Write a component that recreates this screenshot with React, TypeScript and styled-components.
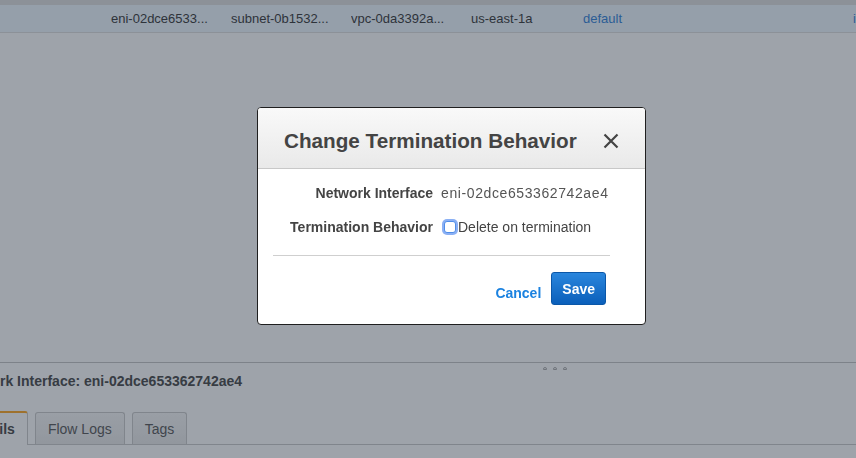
import React, { useState } from 'react';
import styled, { createGlobalStyle } from 'styled-components';

const GlobalStyle = createGlobalStyle`
  html, body {
    margin: 0;
    padding: 0;
    height: 100%;
    overflow: hidden;
    background: #ffffff;
    font-family: "Liberation Sans", Arial, Helvetica, sans-serif;
    color: #444;
  }
  #root {
    height: 100%;
  }
`;

const Page = styled.div`
  display: flex;
  flex-direction: column;
  height: 100vh;
  overflow: hidden;
`;

const TopStrip = styled.div`
  height: 5px;
  background: #dedede;
`;

const TableRow = styled.div`
  display: grid;
  grid-template-columns: 111px 120px 120px 120px 112px 270px 1fr;
  align-items: center;
  height: 27px;
  background: #eef7ff;
  border-bottom: 1px solid #dedede;
  font-size: 13px;
  color: #333;
  white-space: nowrap;
`;

const Cell = styled.div<{ $link?: boolean }>`
  overflow: hidden;
  color: ${({ $link }) => ($link ? '#2f7fd9' : '#333')};
`;

const MainArea = styled.div`
  flex: 1;
`;

const LowerPane = styled.div`
  height: 95px;
  border-top: 1px solid #c4c4c4;
  overflow: hidden;
`;

const Handle = styled.div`
  display: flex;
  gap: 6px;
  height: 10px;
  padding-left: 543px;
  padding-top: 4px;
  box-sizing: border-box;
`;

const HandleDot = styled.span`
  width: 4px;
  height: 3px;
  border: 1px solid #aaa;
  border-radius: 2px 2px 0 0;
  box-sizing: border-box;
`;

const PaneInner = styled.div`
  margin-left: -44px;
`;

const PaneTitle = styled.div`
  padding-left: 2px;
  font-size: 14px;
  line-height: 17px;
  font-weight: bold;
  color: #444;
  white-space: nowrap;
`;

const TabBar = styled.div`
  display: flex;
  align-items: flex-end;
  gap: 7px;
  height: 33px;
  margin-top: 21px;
  border-bottom: 1px solid #c8c8c8;
`;

const Tab = styled.div<{ $active?: boolean }>`
  display: flex;
  align-items: center;
  padding: 0 12px;
  height: ${({ $active }) => ($active ? '32px' : '31px')};
  margin-bottom: ${({ $active }) => ($active ? '-1px' : '0')};
  border: 1px solid #c8c8c8;
  border-bottom: none;
  border-top: ${({ $active }) => ($active ? '2px solid #ffa41c' : '1px solid #c8c8c8')};
  border-radius: 3px 3px 0 0;
  background: ${({ $active }) => ($active ? '#fff' : 'linear-gradient(#f7f7f7, #e9e9e9)')};
  font-size: 14px;
  font-weight: ${({ $active }) => ($active ? 'bold' : 'normal')};
  color: ${({ $active }) => ($active ? '#444' : '#555')};
  white-space: nowrap;
`;

const Backdrop = styled.div`
  position: fixed;
  inset: 0;
  background: rgba(39, 50, 66, 0.45);
`;

const Modal = styled.div`
  position: absolute;
  top: 107px;
  left: 257px;
  width: 389px;
  box-sizing: border-box;
  background: #fff;
  border: 1px solid #1f1f1f;
  border-radius: 4px;
  overflow: hidden;
`;

const ModalHeader = styled.div`
  display: flex;
  align-items: center;
  justify-content: space-between;
  box-sizing: border-box;
  height: 61px;
  padding: 6px 26px 0;
  background: linear-gradient(#f9f9f9, #e9e9e9);
  border-bottom: 1px solid #c8c8c8;
`;

const ModalTitle = styled.h2`
  margin: 0;
  font-size: 20.7px;
  font-weight: bold;
  color: #444;
`;

const CloseButton = styled.button`
  display: flex;
  padding: 0;
  border: none;
  background: none;
  cursor: pointer;
`;

const ModalBody = styled.div`
  padding-top: 14px;
`;

const FieldGrid = styled.div`
  display: grid;
  grid-template-columns: 175px 1fr;
  column-gap: 8px;
  row-gap: 14px;
`;

const Label = styled.div`
  height: 20px;
  line-height: 20px;
  text-align: right;
  font-size: 14px;
  font-weight: bold;
  color: #444;
  white-space: nowrap;
`;

const Value = styled.div`
  display: flex;
  align-items: center;
  height: 20px;
  font-size: 14px;
  color: #555;
  white-space: nowrap;
`;

const IdValue = styled(Value)`
  letter-spacing: 0.6px;
`;

const Checkbox = styled.input`
  appearance: none;
  width: 12px;
  height: 12px;
  margin: 0 2px 0 3px;
  border: 1px solid #4f8de8;
  border-radius: 3px;
  background: #fff;
  box-shadow: 0 0 0 2px rgba(100, 150, 240, 0.75);
`;

const CheckLabel = styled.span`
  color: #444;
`;

const Divider = styled.hr`
  width: 337px;
  margin: 18px 0 0 15px;
  border: none;
  border-top: 1px solid #cfcfcf;
`;

const Footer = styled.div`
  display: flex;
  justify-content: flex-end;
  align-items: center;
  gap: 10px;
  padding: 16px 39px 19px 0;
`;

const LinkButton = styled.button`
  padding: 8px 0 0;
  border: none;
  background: none;
  font-family: inherit;
  font-size: 14px;
  font-weight: bold;
  color: #1b82e0;
  cursor: pointer;
`;

const PrimaryButton = styled.button`
  height: 33px;
  padding: 0 10px;
  border: 1px solid #0b57a8;
  border-radius: 3px;
  background: linear-gradient(#2a86dd, #0b5fba);
  font-family: inherit;
  font-size: 14px;
  font-weight: bold;
  color: #fff;
  cursor: pointer;
`;

const CloseIcon = () => (
  <svg width="16" height="16" viewBox="0 0 16 16">
    <path d="M1.5 1.5 L14.5 14.5 M14.5 1.5 L1.5 14.5" stroke="#444" strokeWidth="2.2" fill="none" />
  </svg>
);

const App: React.FC = () => {
  const [deleteOnTermination, setDeleteOnTermination] = useState(false);

  return (
    <>
      <GlobalStyle />
      <Page>
        <TopStrip />
        <TableRow>
          <Cell />
          <Cell>eni-02dce6533...</Cell>
          <Cell>subnet-0b1532...</Cell>
          <Cell>vpc-0da3392a...</Cell>
          <Cell>us-east-1a</Cell>
          <Cell $link>default</Cell>
          <Cell $link>i-0b8f</Cell>
        </TableRow>
        <MainArea />
        <LowerPane>
          <Handle>
            <HandleDot />
            <HandleDot />
            <HandleDot />
          </Handle>
          <PaneInner>
            <PaneTitle>Network Interface: eni-02dce653362742ae4</PaneTitle>
            <TabBar>
              <Tab $active>Details</Tab>
              <Tab>Flow Logs</Tab>
              <Tab>Tags</Tab>
            </TabBar>
          </PaneInner>
        </LowerPane>
      </Page>

      <Backdrop>
        <Modal>
          <ModalHeader>
            <ModalTitle>Change Termination Behavior</ModalTitle>
            <CloseButton aria-label="Close">
              <CloseIcon />
            </CloseButton>
          </ModalHeader>
          <ModalBody>
            <FieldGrid>
              <Label>Network Interface</Label>
              <IdValue>eni-02dce653362742ae4</IdValue>
              <Label>Termination Behavior</Label>
              <Value>
                <Checkbox
                  type="checkbox"
                  checked={deleteOnTermination}
                  onChange={(e) => setDeleteOnTermination(e.target.checked)}
                />
                <CheckLabel>Delete on termination</CheckLabel>
              </Value>
            </FieldGrid>
            <Divider />
            <Footer>
              <LinkButton>Cancel</LinkButton>
              <PrimaryButton>Save</PrimaryButton>
            </Footer>
          </ModalBody>
        </Modal>
      </Backdrop>
    </>
  );
};

export default App;
